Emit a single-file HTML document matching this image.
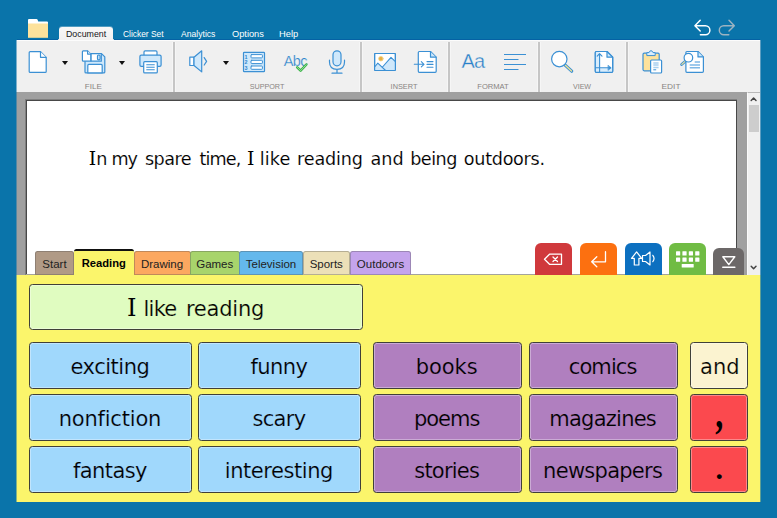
<!DOCTYPE html>
<html>
<head>
<meta charset="utf-8">
<title>Clicker</title>
<style>
html,body{margin:0;padding:0;}
body{width:777px;height:518px;overflow:hidden;background:#0a74aa;position:relative;font-family:"Liberation Sans","DejaVu Sans",sans-serif;}
.abs{position:absolute;}
#ribbon{left:17px;top:40px;width:743px;height:52px;background:#f0f0f0;box-shadow:-1px 0 0 #7db0cc,1px 0 0 #5b9dc1;box-sizing:border-box;border-top:1px solid #fcfcfc;}
#topline{left:17px;top:39px;width:743px;height:1px;background:#0562a4;}
.menutab{position:absolute;top:26.5px;height:14px;line-height:14px;font-size:9.8px;color:#fff;white-space:nowrap;transform-origin:0 50%;}
#doctab{left:59px;top:27px;width:54px;height:14px;background:linear-gradient(#f8f8f8,#f0f0f0);border-radius:3px 3px 0 0;box-shadow:0 -1px 0 rgba(245,245,245,0.3);}
#doctab:before{content:"";position:absolute;left:-2px;bottom:1px;width:2px;height:2px;background:radial-gradient(circle at 0 0,rgba(240,240,240,0) 1.8px,#f0f0f0 2.2px);}
#doctab:after{content:"";position:absolute;right:-2px;bottom:1px;width:2px;height:2px;background:radial-gradient(circle at 100% 0,rgba(240,240,240,0) 1.8px,#f0f0f0 2.2px);}
.sep{position:absolute;top:42px;width:2px;height:50px;background:#c6c6c6;box-shadow:1px 0 0 #f6f6f6,-1px 0 0 #f6f6f6;}
.glabel{position:absolute;top:83px;height:8px;line-height:8px;font-size:8px;color:#888482;text-align:center;width:60px;white-space:nowrap;}
.arrow{position:absolute;width:0;height:0;border-left:3.5px solid transparent;border-right:3.5px solid transparent;border-top:4px solid #111;}
#docarea{left:17px;top:92px;width:743px;height:183px;background:#a0a0a0;box-shadow:-1px 0 0 #5588a4,1px 0 0 #5b9dc1;}
#page{left:25px;top:99px;width:712px;height:176px;background:#fff;box-sizing:border-box;border:1px solid #808080;border-bottom:none;}
#page2{left:26px;top:100px;width:711px;height:175px;background:#fff;box-sizing:border-box;border:1px solid #484848;border-bottom:none;}
.w{display:inline-block;vertical-align:baseline;white-space:nowrap;color:#000;-webkit-text-stroke:0.12px #fff;}
#scroll{left:747px;top:92px;width:13px;height:183px;background:#f0f0f0;box-sizing:border-box;border-left:1px solid #fafafa;border-top:1px solid #b8b8b8;}
#thumb{left:749px;top:105px;width:9.5px;height:26.500px;background:#cdcdcd;}
#yellow{left:17px;top:275px;width:743px;height:227px;background:#fbf56b;box-shadow:-1px 0 0 #83b289,1px 0 0 #5f9f93;}
.tab{position:absolute;top:251px;height:24px;box-sizing:border-box;border:1px solid rgba(80,80,80,0.34);border-radius:2.5px 2.5px 0 0;font-size:11.5px;line-height:25px;text-align:center;color:#222;white-space:nowrap;}
.cell{position:absolute;box-sizing:border-box;border:1px solid #404038;border-radius:3.5px;font-family:"DejaVu Sans","Liberation Sans",sans-serif;font-size:21px;color:#000;text-align:center;white-space:nowrap;box-shadow:inset 0 0 0 1px rgba(255,255,255,0.35);}
.cell span{display:inline-block;position:relative;left:-0.6px;}
.r1{top:342px;height:47px;line-height:49px;}
.r2{top:394px;height:47px;line-height:49px;}
.r3{top:446px;height:47px;line-height:49px;}
.c1{left:29px;width:163px;background:#a0d8fc;-webkit-text-stroke:0.2px #a0d8fc;}
.c2{left:198px;width:163px;background:#a0d8fc;-webkit-text-stroke:0.2px #a0d8fc;}
.c3{left:372.5px;width:149.5px;background:#b07fbf;-webkit-text-stroke:0.2px #b07fbf;}
.c4{left:528.5px;width:149.5px;background:#b07fbf;-webkit-text-stroke:0.2px #b07fbf;}
.c5{left:690px;width:58px;}
.c5 span{left:0.8px;}
.btn{position:absolute;border-radius:6px 6px 0 0;}
</style>
</head>
<body>
<div id="topline" class="abs"></div>
<div id="doctab" class="abs"></div>
<div class="menutab" style="left:65.8px;color:#161620;transform:scaleX(0.90)">Document</div>
<div class="menutab" style="left:122.9px;transform:scaleX(0.857)">Clicker Set</div>
<div class="menutab" style="left:181px;transform:scaleX(0.877)">Analytics</div>
<div class="menutab" style="left:231.500px;transform:scaleX(0.944)">Options</div>
<div class="menutab" style="left:279px;transform:scaleX(0.953)">Help</div>

<div id="ribbon" class="abs"></div>
<div class="sep" style="left:173px"></div>
<div class="sep" style="left:360px"></div>
<div class="sep" style="left:448px"></div>
<div class="sep" style="left:538px"></div>
<div class="sep" style="left:626px"></div>
<div class="glabel" style="left:63.3px">FILE</div>
<div class="glabel" style="left:236.9px;transform:scaleX(0.9)">SUPPORT</div>
<div class="glabel" style="left:374.4px;transform:scaleX(0.917)">INSERT</div>
<div class="glabel" style="left:462.9px;transform:scaleX(0.947)">FORMAT</div>
<div class="glabel" style="left:552.3px;transform:scaleX(0.883)">VIEW</div>
<div class="glabel" style="left:641px;transform:scaleX(1.04)">EDIT</div>
<div class="arrow" style="left:62.3px;top:61px"></div>
<div class="arrow" style="left:118.5px;top:61px"></div>
<div class="arrow" style="left:222.7px;top:61px"></div>

<div id="docarea" class="abs"></div>
<div id="page" class="abs"></div>
<div id="page2" class="abs"></div>
<div class="abs" style="left:88.8px;top:146px;font-size:0;white-space:nowrap;height:26px"><span class="w" style="width:7.5px;font-size:18.8px;line-height:26px;letter-spacing:0.00px;font-family:'DejaVu Serif','Liberation Serif',serif;-webkit-text-stroke:0">I</span><span class="w" style="width:15.3px;font-size:17.6px;line-height:26px;letter-spacing:0.00px;font-family:'DejaVu Sans','Liberation Sans',sans-serif">n</span> <span class="w" style="width:33.4px;font-size:17.6px;line-height:26px;letter-spacing:-1.30px;font-family:'DejaVu Sans','Liberation Sans',sans-serif">my</span> <span class="w" style="width:54.4px;font-size:17.6px;line-height:26px;letter-spacing:-0.57px;font-family:'DejaVu Sans','Liberation Sans',sans-serif">spare</span> <span class="w" style="width:47.5px;font-size:17.6px;line-height:26px;letter-spacing:-0.87px;font-family:'DejaVu Sans','Liberation Sans',sans-serif">time,</span> <span class="w" style="width:12.9px;font-size:18.8px;line-height:26px;letter-spacing:0.00px;font-family:'DejaVu Serif','Liberation Serif',serif;-webkit-text-stroke:0">I</span> <span class="w" style="width:37.3px;font-size:17.6px;line-height:26px;letter-spacing:0.13px;font-family:'DejaVu Sans','Liberation Sans',sans-serif">like</span> <span class="w" style="width:73.4px;font-size:17.6px;line-height:26px;letter-spacing:-0.17px;font-family:'DejaVu Sans','Liberation Sans',sans-serif">reading</span> <span class="w" style="width:39.7px;font-size:17.6px;line-height:26px;letter-spacing:0.00px;font-family:'DejaVu Sans','Liberation Sans',sans-serif">and</span> <span class="w" style="width:53.7px;font-size:17.6px;line-height:26px;letter-spacing:-0.50px;font-family:'DejaVu Sans','Liberation Sans',sans-serif">being</span> <span class="w" style="width:100.0px;font-size:17.6px;line-height:26px;letter-spacing:-0.29px;font-family:'DejaVu Sans','Liberation Sans',sans-serif">outdoors.</span></div>
<div id="scroll" class="abs"></div>
<div id="thumb" class="abs"></div>

<div class="abs" style="left:26px;top:274px;width:711px;height:1px;background:#a4a49c"></div>
<div id="yellow" class="abs"></div>

<!-- tabs -->
<div class="tab" style="left:35px;width:39px;background:#b09a86;">Start</div>
<div class="tab" style="left:133.5px;width:57px;background:#fca860;">Drawing</div>
<div class="tab" style="left:190px;width:49.5px;background:#a8d46c;">Games</div>
<div class="tab" style="left:239px;width:64px;background:#64b8ec;">Television</div>
<div class="tab" style="left:302.5px;width:47.5px;background:#ece0b8;">Sports</div>
<div class="tab" style="left:350px;width:61px;background:#c4a4ec;">Outdoors</div>
<div class="tab" style="left:73.5px;width:60.5px;top:249px;height:28px;background:#fbf56b;border:none;border-top:2px solid #111;font-weight:bold;font-size:11.2px;line-height:25px;color:#000;">Reading</div>

<!-- buttons -->
<div class="btn" style="left:535px;top:243px;width:37px;height:32px;background:#d0393c;"></div>
<div class="btn" style="left:580px;top:243px;width:37px;height:32px;background:#fc7010;"></div>
<div class="btn" style="left:624.5px;top:243px;width:37px;height:32px;background:#0c70c0;"></div>
<div class="btn" style="left:669px;top:243px;width:37px;height:32px;background:#70bc44;"></div>
<div class="btn" style="left:713px;top:248px;width:31px;height:27px;background:#6c6868;"></div>

<!-- grid -->
<div class="cell" style="left:29px;top:284px;width:334px;height:46px;line-height:47px;background:#e0fcc0;text-align:left;-webkit-text-stroke:0.2px #e0fcc0;font-size:0;padding-left:97.1px"><span style="left:0;width:16.3px;font-size:24px;font-family:'DejaVu Serif','Liberation Serif',serif;-webkit-text-stroke:0">I</span> <span style="left:0;width:42.5px;font-size:21px;letter-spacing:-0.7px">like</span> <span style="left:0;font-size:21px;letter-spacing:-0.22px">reading</span></div>
<div class="cell r1 c1"><span style="letter-spacing:-0.49px">exciting</span></div>
<div class="cell r1 c2"><span style="letter-spacing:-0.6px">funny</span></div>
<div class="cell r1 c3"><span style="letter-spacing:-0.08px">books</span></div>
<div class="cell r1 c4"><span style="letter-spacing:-0.9px">comics</span></div>
<div class="cell r1 c5" style="background:#fbf3d0;-webkit-text-stroke:0.2px #fbf3d0"><span>and</span></div>
<div class="cell r2 c1"><span style="letter-spacing:-0.2px">nonfiction</span></div>
<div class="cell r2 c2"><span style="letter-spacing:-0.68px">scary</span></div>
<div class="cell r2 c3"><span style="letter-spacing:-1.05px">poems</span></div>
<div class="cell r2 c4"><span style="letter-spacing:-0.75px">magazines</span></div>
<div class="cell r2 c5" style="background:#fb494e;font-weight:bold;font-size:32px;line-height:37px;font-family:'Liberation Serif','DejaVu Serif',serif"><span style="transform:scaleY(1.4);transform-origin:50% 50%;left:0.2px">,</span></div>
<div class="cell r3 c1"><span style="letter-spacing:-0.57px">fantasy</span></div>
<div class="cell r3 c2"><span style="letter-spacing:-0.44px">interesting</span></div>
<div class="cell r3 c3"><span style="letter-spacing:-0.8px">stories</span></div>
<div class="cell r3 c4"><span style="letter-spacing:-0.73px">newspapers</span></div>
<div class="cell r3 c5" style="background:#fb494e;font-weight:bold;font-size:30px;line-height:44px;font-family:'Liberation Serif','DejaVu Serif',serif"><span style="left:0.2px">.</span></div>

<!-- icons overlay -->
<svg class="abs" style="left:0;top:0" width="777" height="300" viewBox="0 0 777 300" fill="none" stroke-linejoin="round" stroke-linecap="round">
<!-- folder -->
<g stroke="none">
<path d="M28 20 Q28 19 29 19 L36.5 19 Q37.3 19 37.6 19.8 L38.2 21.5 L47 21.5 Q48 21.5 48 22.5 L48 25 L28 25 Z" fill="#fff"/>
<rect x="28" y="23.5" width="20" height="14.3" fill="#fde29c"/>
</g>
<!-- undo / redo -->
<g stroke-width="1.450" fill="none">
<path d="M700.200 20.300 L694.900 25.700 L700.200 31.100 M695.300 25.700 H705.400 A4.500 4.500 0 0 1 705.400 34.700 H700.400" stroke="#fff"/>
<path d="M729 20.300 L734.300 25.700 L729 31.100 M733.900 25.700 H723.800 A4.500 4.500 0 0 0 723.800 34.700 H728.800" stroke="#9cb3c1"/>
</g>
<g stroke="#3b90d4" stroke-width="1.2">
<!-- new doc -->
<path d="M30.2 51.6 L40.5 51.6 L46.2 57.3 L46.2 71.4 Q46.2 72.4 45.2 72.4 L30.2 72.4 Q29.2 72.4 29.2 71.4 L29.2 52.6 Q29.2 51.6 30.2 51.6 Z" fill="#fff"/>
<path d="M40.5 51.8 L40.5 57.3 L46 57.3" fill="#fff"/>
<!-- save -->
<path d="M86 53.6 L101.5 53.6 L104.8 56.9 L104.8 71.9 Q104.8 72.9 103.8 72.9 L86 72.9 Q85 72.9 85 71.9 L85 54.6 Z" fill="#cfe8fb"/>
<rect x="90.9" y="53.6" width="10.4" height="7.6" fill="#fff"/>
<rect x="97.5" y="55" width="2.6" height="4.8" rx="1" fill="#cfe8fb"/>
<path d="M87.8 72.9 L87.8 65.4 Q87.8 64.4 88.8 64.4 L101.2 64.4 Q102.2 64.4 102.2 65.4 L102.2 72.9 Z" fill="#fff"/>
<path d="M83.3 50.9 L87.6 50.9 L90.8 54.1 L90.8 61.2 L83.3 61.2 Q82.4 61.2 82.4 60.3 L82.4 51.8 Q82.4 50.9 83.3 50.9 Z" fill="#fff"/>
<path d="M87.6 51 L87.6 54.1 L90.6 54.1" fill="#fff"/>
<!-- printer -->
<path d="M144 55.200 L144 52 Q144 50.900 145.100 50.900 L155.900 50.900 Q157 50.900 157 52 L157 55.200" fill="#fff"/>
<path d="M143.700 66.300 L141.300 66.300 Q139.900 66.300 139.900 64.900 L139.900 56.600 Q139.900 55.200 141.300 55.200 L159.700 55.200 Q161.100 55.200 161.100 56.600 L161.100 64.900 Q161.100 66.300 159.700 66.300 L157.300 66.300" fill="#cfe8fb"/>
<rect x="143.700" y="61.700" width="13.600" height="11.200" rx="1" fill="#fff"/>
<path d="M146.300 64.700 H154.700 M146.300 67.200 H154.700 M146.300 69.700 H154.700" stroke-width="1.100" stroke-linecap="butt"/>
<!-- speaker -->
<rect x="189.800" y="57.200" width="4.200" height="8.300" fill="#fff"/>
<path d="M194 57.200 L201.700 50.800 L201.700 71.900 L194 65.500 Z" fill="#cfe8fb"/>
<path d="M204.200 57.600 L206.600 61.300 L204.200 65"/>
<!-- numbered list -->
<rect x="243.500" y="52.300" width="21" height="19.400" rx="0.800" fill="#cfe8fb"/>
<rect x="251" y="54.600" width="11.400" height="3.300" rx="0.700" fill="#fff" stroke-width="1"/>
<rect x="251" y="60.300" width="11.400" height="3.300" rx="0.700" fill="#fff" stroke-width="1"/>
<rect x="251" y="66" width="11.400" height="3.300" rx="0.700" fill="#fff" stroke-width="1"/>
<!-- mic -->
<rect x="333" y="50.800" width="8" height="15" rx="4" fill="#cfe8fb"/>
<path d="M329.500 60 L329.500 62 Q329.500 69.300 337 69.300 Q344.500 69.300 344.500 62 L344.500 60 M337 69.300 V73 M332 73.200 H342"/>
<!-- image -->
<rect x="374.600" y="53.500" width="20.800" height="17" rx="0.800" fill="#fff"/>
<path d="M382.700 66.700 L391 57.300 L395.400 61.600 L395.400 70.500 L385.400 70.500 Z" fill="#cfe8fb" stroke="none"/>
<path d="M374.600 67 L377.800 63.200 L385.500 70.500 L374.600 70.500 Z" fill="#cfe8fb" stroke="none"/>
<path d="M382.500 67 L391 57.300 L395.400 61.600 M374.600 67 L377.800 63.200 L385.600 70.500" stroke-width="1.100" fill="none"/>
<rect x="374.600" y="53.500" width="20.800" height="17" rx="0.800" fill="none"/>
<!-- insert doc -->
<path d="M419.300 51.500 L430.500 51.500 L436.200 57.200 L436.200 71.300 Q436.200 72.300 435.200 72.300 L419.300 72.300 Q418.300 72.300 418.300 71.300 L418.300 52.500 Q418.300 51.500 419.300 51.500 Z" fill="#fff"/>
<path d="M430.500 51.700 L430.500 57.200 L436 57.200" fill="#cfe8fb"/>
<path d="M414.300 64.300 H423.800 M421.300 61.700 L424 64.300 L421.300 66.900 M427 61.600 H433 M427 64.400 H433 M427 67.200 H433" stroke-width="1.100"/>
<!-- align -->
<path d="M504 54.500 H526 M504 59.500 H518.500 M504 64.500 H526 M504 69.500 H518.500" stroke-width="1" stroke-linecap="butt"/>
<!-- magnifier -->
<path d="M564.600 64.600 L571.700 71.200" stroke-width="3.200"/>
<path d="M565.300 65.300 L571.500 71" stroke="#f3e38f" stroke-width="1.300"/>
<circle cx="559.300" cy="59.100" r="7.700" fill="#fff"/>
<!-- page size -->
<path d="M596.300 51.500 L607 51.500 L612.700 57.200 L612.700 71.300 Q612.700 72.300 611.700 72.300 L596.300 72.300 Q595.300 72.300 595.300 71.300 L595.300 52.500 Q595.300 51.500 596.300 51.500 Z" fill="#fff"/>
<path d="M595.300 52 L599.600 52 L599.600 67.800 L612.700 67.800 L612.700 72.300 L595.300 72.300 Z" fill="#d9edfc" stroke="none"/>
<path d="M607 51.700 L607 57.200 L612.500 57.200" fill="#cfe8fb"/>
<path d="M599.600 53.800 V72 M597.200 56.200 L599.600 53.600 L602 56.200 M595.500 67.800 H610.500" stroke-width="1.100"/>
<path d="M608.300 65.400 L611.200 67.800 L608.300 70.200 Z" fill="#3b90d4" stroke-width="0.600"/>
<path d="M596.300 51.500 L607 51.500 L612.700 57.200 L612.700 71.300 Q612.700 72.300 611.700 72.300 L596.300 72.300 Q595.300 72.300 595.300 71.300 L595.300 52.500 Q595.300 51.500 596.300 51.500 Z" fill="none"/>
<!-- clipboard -->
<path d="M644.200 53.200 L658 53.200 Q659.200 53.200 659.200 54.400 L659.200 70.800 L644.200 70.800 Q643 70.800 643 69.600 L643 54.400 Q643 53.200 644.200 53.200 Z" fill="#fde29c"/>
<path d="M646.800 55.200 L646.800 52.600 L649 52.600 Q649.600 50.700 651 50.700 Q652.400 50.700 653 52.600 L655.200 52.600 L655.200 55.200 Z" fill="#d9edfc" stroke-width="1"/>
<rect x="650.600" y="60" width="11" height="13" rx="1" fill="#fff"/>
<path d="M653.300 63.100 H658.600 M653.300 65.100 H658.600 M653.300 67.500 H658.600" stroke="#a9d0f0" stroke-width="1.500" stroke-linecap="butt"/>
<path d="M653.300 69.800 H656.200" stroke-width="1" stroke-linecap="butt"/>
<!-- find doc -->
<path d="M686.900 51.500 L698 51.500 L703.400 56.900 L703.400 71.300 Q703.400 72.300 702.400 72.300 L686.900 72.300 Q685.900 72.300 685.900 71.300 L685.900 52.500 Q685.900 51.500 686.900 51.500 Z" fill="#fff"/>
<path d="M698 51.700 L698 56.900 L703.200 56.900" fill="#cfe8fb"/>
<path d="M694.700 62.100 H700 M689.700 65 H700 M689.700 67.800 H700" stroke="#7fb8e6" stroke-width="1.500" stroke-linecap="butt"/>
<path d="M685 61.400 L681.600 64.600" stroke-width="2.800"/>
<path d="M684.800 61.600 L681.800 64.400" stroke="#f3e38f" stroke-width="1.100"/>
<circle cx="688.400" cy="57.700" r="4.300" fill="#fff"/>
</g>
<!-- text icons -->
<g stroke="none" fill="#2f86cc" font-family="'Liberation Sans','DejaVu Sans',sans-serif">
<text x="244.600" y="58.500" font-size="5.400" font-weight="bold">1</text>
<text x="244.600" y="64.200" font-size="5.400" font-weight="bold">2</text>
<text x="244.600" y="69.900" font-size="5.400" font-weight="bold">3</text>
<text x="283.800" y="66.300" font-size="14.500" letter-spacing="-0.700" stroke="#f0f0f0" stroke-width="0.200">Abc</text>
<text x="461.500" y="68.400" font-size="20" letter-spacing="-0.800" stroke="#f0f0f0" stroke-width="0.350" fill="#2a80c8">Aa</text>
</g>
<path d="M297.200 67.300 L300.600 70.700 L306.400 64.500" stroke="#3cb54a" stroke-width="2.500" fill="none"/><path d="M297.400 67.500 L300.600 70.600 L306.200 64.700" stroke="#b8e8b4" stroke-width="0.700" fill="none"/>
<circle cx="380.900" cy="58.700" r="2.300" fill="#e9b142" stroke="#f3d48c" stroke-width="0.800"/>
<!-- button icons -->
<g stroke="#fff" stroke-width="1.300" fill="none">
<path d="M549.500 254.200 L561.500 254.200 L561.500 264.300 L549.500 264.300 L544.500 259.250 Z"/>
<path d="M553 257 L557.500 261.500 M557.500 257 L553 261.500"/>
<path d="M605.500 251.700 L605.500 261.800 L592 261.800 M596.800 256.800 L591.700 261.800 L596.800 266.800"/>
<path d="M636.600 251.900 L631.500 258.400 L634.300 258.400 L634.300 265 L638.900 265 L638.900 258.400 L641.700 258.400 Z" stroke-width="1.200"/>
<path d="M642.500 255.500 L645.500 255.500 L650 252 L650 265 L645.500 261.500 L642.500 261.500 Z" stroke-width="1.200"/>
<path d="M652.800 255.300 Q655.300 258.500 652.800 261.700" stroke-width="1.200"/>
<path d="M722.800 256.800 L734.800 256.800 L728.800 264.600 Z" stroke-width="1.400"/>
<path d="M722.800 267.300 L734.800 267.300" stroke-width="1.600"/>
</g>
<g fill="#fff" stroke="none">
<rect x="676" y="251.300" width="4.200" height="4.200" rx="0.500"/><rect x="682.400" y="251.300" width="4.200" height="4.200" rx="0.500"/><rect x="688.800" y="251.300" width="4.200" height="4.200" rx="0.500"/><rect x="695.200" y="251.300" width="4.200" height="4.200" rx="0.500"/>
<rect x="676" y="257.500" width="4.200" height="4.200" rx="0.500"/><rect x="682.400" y="257.500" width="4.200" height="4.200" rx="0.500"/><rect x="688.800" y="257.500" width="4.200" height="4.200" rx="0.500"/><rect x="695.200" y="257.500" width="4.200" height="4.200" rx="0.500"/>
<rect x="681.700" y="264.100" width="12" height="3.400" rx="0.500"/>
</g>
<!-- scrollbar arrows -->
<g stroke="#444" stroke-width="1.300" fill="none">
<path d="M751.200 100.500 L753.600 98 L756 100.500" stroke-width="1.500"/>
<path d="M751.200 266.300 L753.600 268.800 L756 266.300" stroke-width="1.500"/>
</g>

</svg>
</body>
</html>
